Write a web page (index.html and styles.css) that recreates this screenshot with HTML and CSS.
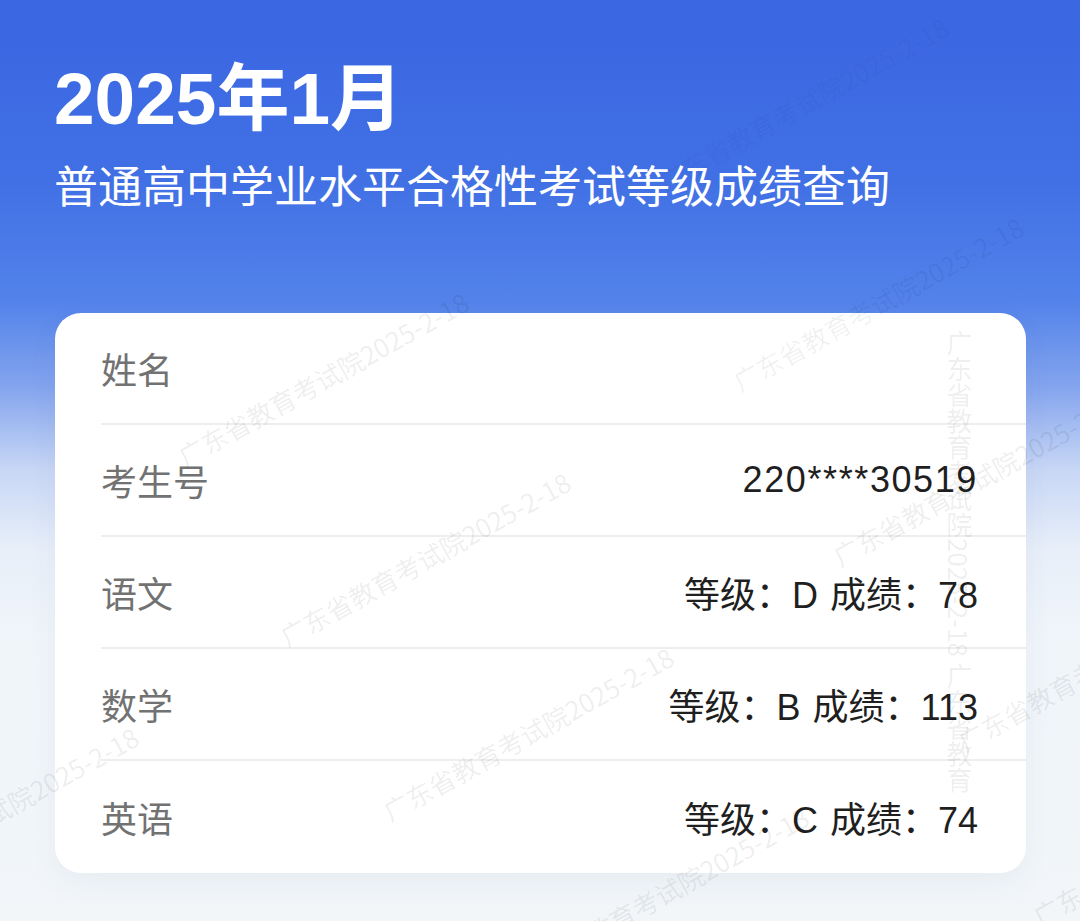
FILE: index.html
```html
<!DOCTYPE html>
<html lang="zh-CN">
<head>
<meta charset="utf-8">
<title>2025年1月 普通高中学业水平合格性考试等级成绩查询</title>
<link rel="stylesheet" href="styles.css">
</head>
<body>
<main class="page">
  <header class="hero">
    <h1 class="title">2025年1月</h1>
    <p class="subtitle">普通高中学业水平合格性考试等级成绩查询</p>
  </header>
  <section class="card">
    <div class="row"><span class="label">姓名</span><span class="value"></span></div>
    <div class="row"><span class="label">考生号</span><span class="value id">220****30519</span></div>
    <div class="row"><span class="label">语文</span><span class="value">等级：D 成绩：78</span></div>
    <div class="row"><span class="label">数学</span><span class="value">等级：B 成绩：113</span></div>
    <div class="row"><span class="label">英语</span><span class="value">等级：C 成绩：74</span></div>
  </section>
  <div class="watermarks" aria-hidden="true">
    <span class="wm wm1">广东省教育考试院2025-2-18</span>
    <span class="wm wm2">广东省教育考试院2025-2-18</span>
    <span class="wm wm3">广东省教育考试院2025-2-18</span>
    <span class="wm wm4">广东省教育考试院2025-2-18</span>
    <span class="wm wm5">广东省教育考试院2025-2-18</span>
    <span class="wm wm6">广东省教育考试院2025-2-18</span>
    <span class="wm wm7">广东省教育考试院2025-2-18</span>
    <span class="wm wm8">广东省教育考试院2025-2-18</span>
    <span class="wm wm9">广东省教育考试院2025-2-18</span>
    <span class="wm wm10">广东省教育考试院2025-2-18</span>
    <span class="wm wmv">广东省教育考试院2025-2-18 广东省教育</span>
  </div>
</main>
</body>
</html>
```

FILE: styles.css
```css
html, body {
  margin: 0;
  padding: 0;
}

body {
  width: 1080px;
  height: 921px;
  overflow: hidden;
  font-family: "Liberation Sans", "Noto Sans CJK SC", sans-serif;
  background: linear-gradient(180deg,
    #3a66e2 0px,
    #4170e5 180px,
    #5282ea 300px,
    #86a6ee 390px,
    #c8d7f5 470px,
    #e8eff9 550px,
    #f0f5fa 640px,
    #f2f6f9 921px);
}

.page {
  position: relative;
  height: 921px;
  padding-top: 62px;
  box-sizing: border-box;
}

.hero {
  padding-left: 54px;
  color: #ffffff;
}

.title {
  margin: 0;
  font-size: 73px;
  line-height: 74px;
  font-weight: 700;
  letter-spacing: 0;
}

.subtitle {
  margin: 26px 0 0;
  font-family: "Noto Sans CJK SC", sans-serif;
  font-size: 44px;
  line-height: 44px;
  font-weight: 400;
  letter-spacing: 0;
}

.card {
  margin: 107px 0 0 55px;
  width: 971px;
  background: #ffffff;
  border-radius: 26px;
  box-shadow: 0 10px 30px rgba(60, 90, 140, 0.06);
  overflow: hidden;
}

.row {
  display: flex;
  align-items: center;
  justify-content: space-between;
  height: 112px;
  margin-left: 46px;
  padding-right: 48px;
  border-bottom: 2px solid #eeeeee;
  box-sizing: border-box;
}

.row:last-child {
  border-bottom: none;
}

.label {
  font-family: "Noto Sans CJK SC", sans-serif;
  font-size: 36px;
  color: #727272;
}

.value {
  font-size: 36px;
  color: #1f1f1f;
  word-spacing: 2px;
}

.value.id {
  letter-spacing: 1.6px;
}

.watermarks {
  position: absolute;
  inset: 0;
  overflow: hidden;
  pointer-events: none;
}

.wm {
  position: absolute;
  white-space: nowrap;
  font-family: "Noto Sans CJK SC", sans-serif;
  font-size: 26px;
  line-height: 26px;
  color: rgba(0, 0, 0, 0.08);
  transform-origin: 0 50%;
  transform: rotate(-29deg);
}

.wm1 { left: 180px; top: 445px; }
.wm2 { left: 282px; top: 625px; }
.wm3 { left: -150px; top: 880px; }
.wm4 { left: 385px; top: 800px; }
.wm5 { left: 735px; top: 370px; color: rgba(0, 0, 40, 0.06); }
.wm6 { left: 835px; top: 545px; }
.wm7 { left: 520px; top: 960px; }
.wm8 { left: 960px; top: 730px; }
.wm9 { left: 1035px; top: 905px; }
.wm10 { left: 660px; top: 170px; color: rgba(0, 0, 40, 0.05); }

.wmv {
  left: 946px;
  top: 330px;
  transform: none;
  writing-mode: vertical-rl;
  line-height: 26px;
}
```
